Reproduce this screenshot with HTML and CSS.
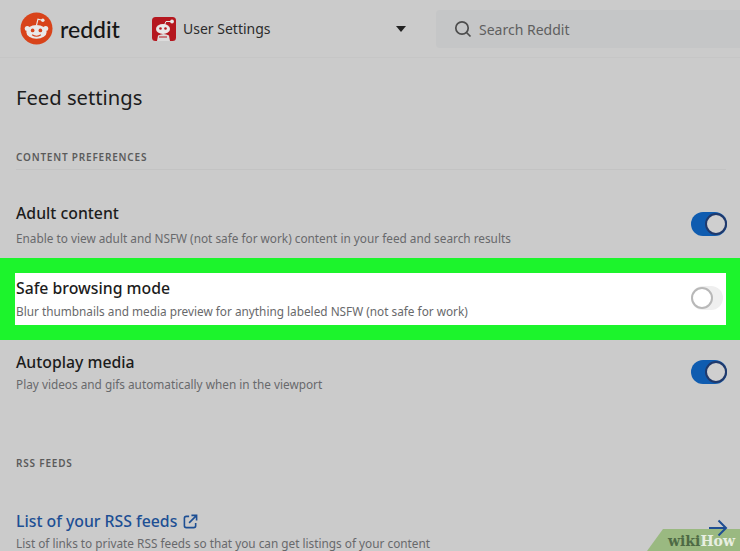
FILE: index.html
```html
<!DOCTYPE html>
<html lang="en">
<head>
<meta charset="utf-8">
<title>Feed settings</title>
<link rel="stylesheet" href="styles.css">
</head>
<body>
<div class="page">
  <header class="topbar">
    <svg class="logo" viewBox="0 0 34 34" aria-hidden="true">
      <circle cx="17" cy="17" r="16.5" fill="#d8431a"/>
      <ellipse cx="17" cy="20.5" rx="10.5" ry="7" fill="#e9e9e9"/>
      <circle cx="7.5" cy="17" r="2.6" fill="#e9e9e9"/>
      <circle cx="26.5" cy="17" r="2.6" fill="#e9e9e9"/>
      <circle cx="13" cy="19" r="1.9" fill="#d8431a"/>
      <circle cx="21" cy="19" r="1.9" fill="#d8431a"/>
      <path d="M12.5 23.5q4.500 3 9 0" fill="none" stroke="#d8431a" stroke-width="1.200"/>
      <path d="M17 13.500L18.500 7.500L23 8.500" fill="none" stroke="#e9e9e9" stroke-width="1.200"/>
      <circle cx="23.500" cy="8.500" r="1.800" fill="#e9e9e9"/>
    </svg>
    <span class="wordmark">reddit</span>
    <div class="switcher">
      <svg class="avatar" viewBox="0 0 24 24" aria-hidden="true">
        <rect width="24" height="24" rx="3.500" fill="#b5171f"/>
        <circle cx="20" cy="4.500" r="1.900" fill="#e9e9e9"/>
        <path d="M12 9L14 4.500L19 4.500" fill="none" stroke="#e9e9e9" stroke-width="1"/>
        <ellipse cx="11" cy="12" rx="7" ry="5" fill="#e9e9e9"/>
        <circle cx="8.500" cy="11.500" r="1.300" fill="#b5171f"/>
        <circle cx="13.500" cy="11.500" r="1.300" fill="#b5171f"/>
        <path d="M5 24L6 18.500Q12 15.500 17 18.500L18 24Z" fill="#dcdcdc"/>
        <path d="M7 20L15 20" stroke="#b5171f" stroke-width="1"/>
      </svg>
      <span class="switcher-label">User Settings</span>
      <span class="caret"></span>
    </div>
    <div class="search">
      <svg class="search-icon" viewBox="0 0 18 18" aria-hidden="true">
        <circle cx="8" cy="8" r="6.200" fill="none" stroke="#4d4d4d" stroke-width="1.700"/>
        <path d="M12.500 12.500L16.500 16.500" stroke="#4d4d4d" stroke-width="1.700"/>
      </svg>
      <span>Search Reddit</span>
    </div>
  </header>

  <main class="content">
    <h1 class="title">Feed settings</h1>
    <h2 class="section-label">CONTENT PREFERENCES</h2>

    <div class="row row-first">
      <div class="row-text">
        <div class="row-name">Adult content</div>
        <div class="row-desc">Enable to view adult and NSFW (not safe for work) content in your feed and search results</div>
      </div>
      <span class="toggle on"><span class="knob"></span></span>
    </div>

    <div class="highlight">
      <div class="row row-lit">
        <div class="row-text">
          <div class="row-name">Safe browsing mode</div>
          <div class="row-desc">Blur thumbnails and media preview for anything labeled NSFW (not safe for work)</div>
        </div>
        <span class="toggle off"><span class="knob"></span></span>
      </div>
    </div>

    <div class="row row-auto">
      <div class="row-text">
        <div class="row-name">Autoplay media</div>
        <div class="row-desc">Play videos and gifs automatically when in the viewport</div>
      </div>
      <span class="toggle on"><span class="knob"></span></span>
    </div>

    <h2 class="section-label section-rss">RSS FEEDS</h2>

    <div class="row row-rss">
      <div class="row-text">
        <div class="row-name link">List of your RSS feeds
          <svg class="ext" viewBox="0 0 16 16" aria-hidden="true">
            <path d="M6.500 2.500H3.500Q1.500 2.500 1.500 4.500V12.500Q1.500 14.500 3.500 14.500H11.500Q13.500 14.500 13.500 12.500V9.500" fill="none" stroke="#1d4f94" stroke-width="1.700"/>
            <path d="M6.500 9.500L14 2M9 1.500H14.500V7" fill="none" stroke="#1d4f94" stroke-width="1.700"/>
          </svg>
        </div>
        <div class="row-desc">List of links to private RSS feeds so that you can get listings of your content</div>
      </div>
    </div>
  </main>

  <div class="wikihow">
    <svg class="wh-shape" viewBox="0 0 93 22" aria-hidden="true"><path d="M0 22L16 0H93V22Z" fill="#9ab981"/></svg>
    <span class="wh-text"><span class="wh-wiki">wiki</span><span class="wh-how">How</span></span>
  </div>
  <svg class="arrow" viewBox="0 0 20 18" aria-hidden="true">
    <path d="M1 9H18M10.500 1.500L18 9L10.500 16.500" fill="none" stroke="#1f4e93" stroke-width="2"/>
  </svg>
</div>
</body>
</html>
```
FILE: styles.css
```css
* { box-sizing: border-box; }
html, body { margin: 0; padding: 0; }
body {
  background: #cbcbcb;
  font-family: "Noto Sans", "Liberation Sans", sans-serif;
  color: #1c1c1c;
}
.page {
  position: relative;
  width: 740px;
  height: 551px;
  overflow: hidden;
  background: #cbcbcb;
}
.topbar {
  display: flex;
  align-items: center;
  height: 58px;
  padding: 0 0 0 20px;
  border-bottom: 1px solid #c6c6c6;
}
.logo { width: 33px; height: 33px; flex: none; }
.wordmark {
  margin-left: 7px;
  width: 92px;
  font-size: 23px;
  font-family: "Lato", sans-serif;
  font-weight: 500;
  color: #161616;
}
.switcher {
  display: flex;
  align-items: center;
  width: 284px;
  flex: none;
}
.avatar { width: 24px; height: 24px; flex: none; }
.switcher-label {
  margin-left: 7px;
  font-size: 14px;
  color: #2b2b2b;
  flex: 1;
}
.caret {
  width: 0;
  height: 0;
  margin-right: 30px;
  border-left: 5px solid transparent;
  border-right: 5px solid transparent;
  border-top: 6px solid #222;
}
.search {
  flex: 1;
  display: flex;
  align-items: center;
  gap: 7px;
  height: 38px;
  margin-top: 1px;
  padding-left: 18px;
  background: #c5c6c7;
  border-radius: 4px 0 0 4px;
  font-size: 14px;
  color: #5f5f5f;
}
.search-icon { width: 18px; height: 18px; flex: none; }
.content { padding-top: 25px; }
.title {
  margin: 0 0 0 16px;
  font-size: 20.200px;
  line-height: 28px;
  font-weight: 400;
  color: #1c1c1c;
}
.section-label {
  margin: 38px 14px 0 16px;
  padding-bottom: 4px;
  height: 21px;
  border-bottom: 1px solid #c3c3c3;
  font-size: 10px;
  line-height: 16px;
  font-weight: 600;
  letter-spacing: 0.800px;
  color: #5b5b5b;
}
.row {
  display: flex;
  align-items: center;
  justify-content: space-between;
  padding-left: 16px;
  padding-right: 13px;
}
.row-first { margin-top: 32px; }
.row-first .row-desc { margin-top: 6px; }
.row-text { min-width: 0; }
.row-name {
  font-size: 15.800px;
  line-height: 22px;
  font-weight: 500;
  color: #1c1c1c;
}
.row-desc {
  margin-top: 3px;
  font-size: 11.800px;
  line-height: 16px;
  color: #68696b;
  white-space: nowrap;
}
.highlight {
  margin-top: 12px;
  height: 82px;
  padding: 15px 14px 15px 15px;
  background: #1cf42c;
}
.row-lit {
  height: 52px;
  padding: 0 3px 3px 1px;
  background: #fff;
}
.row-lit .row-desc { margin-top: 4px; }
.row-auto { margin-top: 11px; }
.section-rss { margin-top: 63px; border-bottom: 0; }
.row-rss { margin-top: 34px; }
.link { color: #1d4f94; display: flex; align-items: center; gap: 6px; }
.ext { width: 15px; height: 15px; flex: none; }
.toggle {
  position: relative;
  display: block;
  width: 36px;
  height: 24px;
  border-radius: 12px;
  flex: none;
}
.toggle.on { background: #0f5cb0; }
.toggle.off { width: 32px; background: #efefef; }
.knob {
  position: absolute;
  top: 1px;
  width: 22px;
  height: 22px;
  border-radius: 50%;
}
.toggle.on .knob {
  right: 0;
  background: #cfcfcf;
  border: 2px solid #20396b;
}
.toggle.off .knob {
  left: 0;
  background: #fff;
  border: 2px solid #b8b8b8;
}
.wikihow {
  position: absolute;
  right: 0;
  bottom: 0;
  width: 93px;
  height: 22px;
}
.wh-shape { position: absolute; inset: 0; width: 93px; height: 22px; }
.wh-text {
  position: absolute;
  left: 21px;
  bottom: 1px;
  font-family: "DejaVu Serif", "Liberation Serif", serif;
  font-size: 14px;
  line-height: 18px;
  font-weight: 700;
}
.wh-wiki { color: #4e6a45; }
.wh-how { color: #e8efe2; }
.arrow {
  position: absolute;
  left: 708px;
  top: 519px;
  width: 20px;
  height: 18px;
}
```
